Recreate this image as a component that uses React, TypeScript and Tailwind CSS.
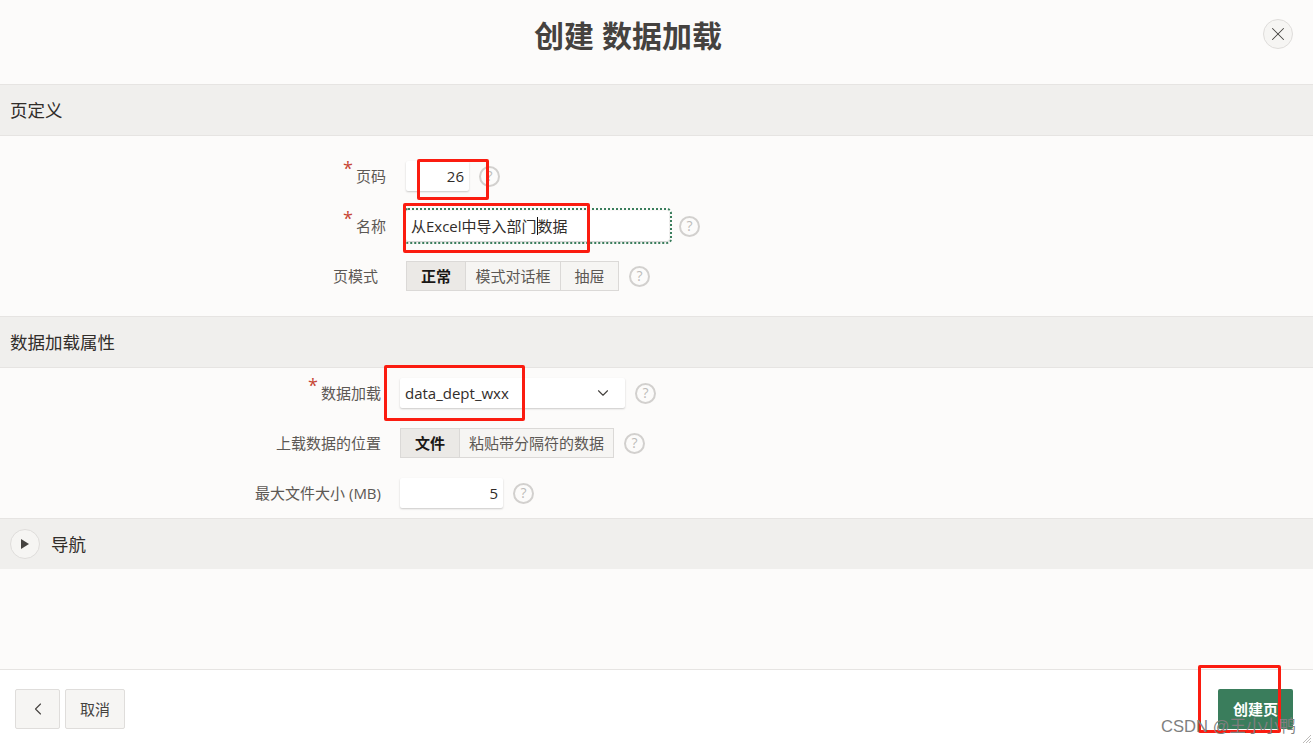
import { ChevronDown, ChevronLeft, X } from 'lucide-react';

const font = { fontFamily: '"Open Sans", "Noto Sans CJK SC", sans-serif' };

function Help() {
  return (
    <span className="flex h-[21px] w-[21px] shrink-0 items-center justify-center rounded-full border-2 border-[#d2d0ce] text-[14px] leading-none text-[#bdbbb9]">
      ?
    </span>
  );
}

function Label({ text, width, required }: { text: string; width: string; required?: boolean }) {
  return (
    <div className={`${width} relative flex h-[30px] shrink-0 items-center justify-end text-[15px] text-[#5c5854]`}>
      <span className="relative">
        {required && <span className="absolute -left-[13px] -top-[6px] text-[18px] leading-none text-[#c74634]">*</span>}
        {text}
      </span>
    </div>
  );
}

function Toggle({ items, widths }: { items: string[]; widths: string[] }) {
  return (
    <div className="flex h-[30px] border border-[#dbd9d7] text-[15px]">
      {items.map((item, i) => (
        <span
          key={item}
          className={`${widths[i]} flex items-center justify-center border-[#dbd9d7] ${i > 0 ? 'border-l bg-[#f6f5f3] text-[#5c5854]' : 'bg-[#ebe9e6] font-bold text-[#1a1816]'}`}
        >
          {item}
        </span>
      ))}
    </div>
  );
}

function SectionHead({ title }: { title: string }) {
  return (
    <div className="flex h-[52px] items-center border-y border-[#e6e4e2] bg-[#f0efed] pl-[10px] text-[17.5px] text-[#312d2a]">
      {title}
    </div>
  );
}

const inputCls = 'h-[30px] rounded-[2px] bg-white shadow-[0_1px_2px_rgba(0,0,0,0.2)] text-[15px] text-[#312d2a] flex items-center';

export default function App() {
  return (
    <div className="relative flex h-[745px] w-[1313px] flex-col overflow-hidden bg-[#fcfbfa]" style={font}>
      {/* header */}
      <div className="relative flex h-[84px] shrink-0 items-start justify-center pr-[57px] pt-[14px]">
        <h1 className="text-[30px] font-bold leading-[44px] text-[#45423f]">创建 数据加载</h1>
        <button className="absolute right-[20px] top-[19px] flex h-[30px] w-[30px] items-center justify-center rounded-full border border-[#dfdddb] bg-[#f6f5f3]">
          <X className="h-[22px] w-[22px] text-[#45423f]" strokeWidth={1.1} />
        </button>
      </div>

      <SectionHead title="页定义" />
      <div className="flex h-[180px] shrink-0 flex-col gap-[20px] pt-[25px]">
        <div className="flex items-center">
          <Label text="页码" width="w-[386px]" required />
          <div className={`${inputCls} ml-[20px] w-[63px] justify-end pr-[5px]`}>26</div>
          <div className="ml-[10px]"><Help /></div>
        </div>
        <div className="flex items-center">
          <Label text="名称" width="w-[386px]" required />
          <div className={`${inputCls} relative ml-[20px] w-[263px] pl-[5px] outline-2 outline-offset-1 outline-dotted outline-[#3a7d5c]`}>
            从Excel中导入部门
            <span className="h-[18px] w-px bg-[#111]" />
            数据
          </div>
          <div className="ml-[10px]"><Help /></div>
        </div>
        <div className="flex items-center">
          <Label text="页模式" width="w-[378px]" />
          <div className="ml-[28px]">
            <Toggle items={['正常', '模式对话框', '抽屉']} widths={['w-[58px]', 'w-[95px]', 'w-[58px]']} />
          </div>
          <div className="ml-[10px]"><Help /></div>
        </div>
      </div>

      <SectionHead title="数据加载属性" />
      <div className="flex h-[150px] shrink-0 flex-col gap-[20px] pt-[10px]">
        <div className="flex items-center">
          <Label text="数据加载" width="w-[381px]" required />
          <div className={`${inputCls} ml-[19px] w-[225px] justify-between pl-[5px] pr-[13px] text-[14.7px] text-[#5c5854]`}>
            data_dept_wxx
            <ChevronDown className="h-[18px] w-[18px] text-[#45423f]" strokeWidth={1.5} />
          </div>
          <div className="ml-[10px]"><Help /></div>
        </div>
        <div className="flex items-center">
          <Label text="上载数据的位置" width="w-[381px]" />
          <div className="ml-[19px]">
            <Toggle items={['文件', '粘贴带分隔符的数据']} widths={['w-[58px]', 'w-[154px]']} />
          </div>
          <div className="ml-[10px]"><Help /></div>
        </div>
        <div className="flex items-center">
          <Label text="最大文件大小 (MB)" width="w-[381px]" />
          <div className={`${inputCls} ml-[19px] w-[103px] justify-end pr-[5px]`}>5</div>
          <div className="ml-[10px]"><Help /></div>
        </div>
      </div>

      <div className="flex h-[51px] shrink-0 items-center gap-[11px] border-t border-[#e6e4e2] bg-[#f0efed] pl-[10px] text-[17.5px] text-[#312d2a]">
        <span className="flex h-[30px] w-[30px] items-center justify-center rounded-full border border-[#dfdddb] bg-[#f6f5f3]">
          <svg width="10" height="12" viewBox="0 0 10 12">
            <path d="M1 1 L9 6 L1 11 Z" fill="#45423f" />
          </svg>
        </span>
        导航
      </div>

      <div className="flex-1" />

      {/* footer */}
      <div className="flex h-[76px] shrink-0 items-start justify-between border-t border-[#e6e4e2] bg-white px-[15px] pr-[20px] pt-[19px]">
        <div className="flex gap-[5px]">
          <button className="flex h-[40px] w-[45px] items-center justify-center rounded-[2px] border border-[#dfdddb] bg-[#f6f5f3]">
            <ChevronLeft className="h-[20px] w-[20px] text-[#45423f]" strokeWidth={1.3} />
          </button>
          <button className="h-[40px] w-[60px] rounded-[2px] border border-[#dfdddb] bg-[#f6f5f3] text-[15px] text-[#45423f]">
            取消
          </button>
        </div>
        <button className="h-[40px] w-[75px] rounded-[2px] bg-[#3a7d5c] text-[15px] font-bold text-white">创建页</button>
      </div>

      {/* red annotation boxes */}
      <div className="absolute left-[417px] top-[159px] h-[41px] w-[72px] rounded-[2px] border-[3px] border-[#fb1c10]" />
      <div className="absolute left-[403px] top-[203px] h-[50px] w-[187px] rounded-[2px] border-[3px] border-[#fb1c10]" />
      <div className="absolute left-[384px] top-[365px] h-[56px] w-[141px] rounded-[2px] border-[3px] border-[#fb1c10]" />
      <div className="absolute left-[1198px] top-[665px] h-[68px] w-[83px] rounded-[2px] border-[3px] border-[#fb1c10]" />

      {/* watermark */}
      <span className="absolute left-[1161px] top-[717px] text-[16.6px] leading-[20px] text-[#7f7f7f]" style={{ fontFamily: '"Liberation Sans", "Noto Sans CJK SC", sans-serif' }}>CSDN @王小小鸭</span>
      <svg width="10" height="10" viewBox="0 0 10 10" className="absolute bottom-[1px] right-[1px]">
        <path d="M1 9 L9 1 M4 9 L9 4 M7 9 L9 7" stroke="#bdbbb9" strokeWidth="1" />
      </svg>
    </div>
  );
}
